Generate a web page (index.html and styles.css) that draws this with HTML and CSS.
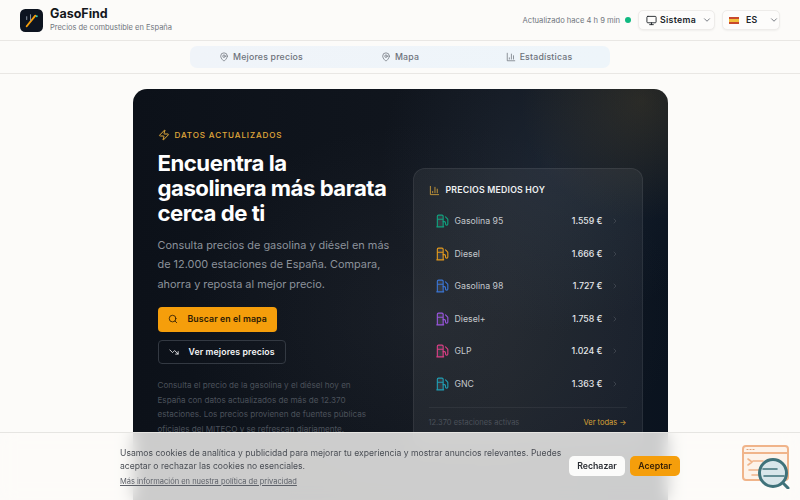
FILE: index.html
```html
<!DOCTYPE html>
<html lang="es">

<head>
  <meta charset="UTF-8">
  <meta name="viewport" content="width=device-width, initial-scale=1.0">
  <title>GasoFind</title>
  <link rel="stylesheet" href="styles.css">
</head>

<body>
  <svg class="sprite" width="0" height="0" aria-hidden="true">
    <symbol id="fuel" viewBox="0 0 24 24">
      <path d="M3 22h12M4 9h10M14 22V4a2 2 0 0 0-2-2H6a2 2 0 0 0-2 2v18Z" />
      <path fill="none" d="M14 13h2a2 2 0 0 1 2 2v2a2 2 0 0 0 2 2a2 2 0 0 0 2-2V9.83a2 2 0 0 0-.59-1.42L18 5" />
    </symbol>
    <symbol id="pin" viewBox="0 0 24 24">
      <path d="M20 10c0 6-8 12-8 12s-8-6-8-12a8 8 0 0 1 16 0Z" />
      <circle cx="12" cy="10" r="3" />
    </symbol>
    <symbol id="bars" viewBox="0 0 24 24">
      <path d="M3 3v18h18M18 17V9M13 17V5M8 17v-3" />
    </symbol>
    <symbol id="chevron-down" viewBox="0 0 24 24">
      <path d="m6 9 6 6 6-6" />
    </symbol>
    <symbol id="chevron-right" viewBox="0 0 24 24">
      <path d="m9 18 6-6-6-6" />
    </symbol>
  </svg>

  <header class="topbar">
    <div class="brand">
      <svg class="logo" viewBox="0 0 24 24">
        <rect width="24" height="24" rx="5.5" fill="#0d1420" />
        <path d="M7 18 16 7" stroke="#f59e0b" stroke-width="2" stroke-linecap="round" />
        <path d="M7 11v-3M11 12V6" stroke="#8a94a3" stroke-width="1" stroke-linecap="round" />
        <circle cx="17.5" cy="7.5" r="1" fill="#2dd4bf" />
      </svg>
      <div>
        <div class="brand-name">GasoFind</div>
        <div class="brand-sub">Precios de combustible en España</div>
      </div>
    </div>
    <div class="top-actions">
      <span class="updated">Actualizado hace 4 h 9 min</span>
      <span class="dot"></span>
      <button class="select select-theme">
        <svg class="ico-theme" viewBox="0 0 24 24">
          <rect x="2" y="3" width="20" height="14" rx="2" />
          <path d="M8 21h8M12 17v4" />
        </svg>
        Sistema
        <svg class="ico-chev"><use href="#chevron-down" /></svg>
      </button>
      <button class="select select-lang">
        <span class="flag"></span>
        ES
        <svg class="ico-chev"><use href="#chevron-down" /></svg>
      </button>
    </div>
  </header>

  <nav class="subnav">
    <div class="tabs">
      <a class="tab"><svg><use href="#pin" /></svg>Mejores precios</a>
      <a class="tab"><svg><use href="#pin" /></svg>Mapa</a>
      <a class="tab"><svg><use href="#bars" /></svg>Estadísticas</a>
    </div>
  </nav>

  <main class="content">
    <section class="hero">
      <div class="hero-left">
        <div class="badge">
          <svg viewBox="0 0 24 24">
            <path d="M4 14a1 1 0 0 1-.78-1.63l9.9-10.2a.5.5 0 0 1 .86.46l-1.92 6.02A1 1 0 0 0 13 10h7a1 1 0 0 1 .78 1.63l-9.9 10.2a.5.5 0 0 1-.86-.46l1.92-6.02A1 1 0 0 0 11 14z" />
          </svg>
          DATOS ACTUALIZADOS
        </div>
        <h1>Encuentra la gasolinera más barata cerca de ti</h1>
        <p class="lead">Consulta precios de gasolina y diésel en más de 12.000 estaciones de España. Compara, ahorra y reposta al mejor precio.</p>
        <div class="hero-btns">
          <a class="btn btn-primary">
            <svg viewBox="0 0 24 24"><circle cx="11" cy="11" r="8" /><path d="m21 21-4.3-4.3" /></svg>
            Buscar en el mapa
          </a>
          <a class="btn btn-ghost">
            <svg viewBox="0 0 24 24"><path d="M22 17l-8.500-8.500-5 5L2 7M16 17h6v-6" /></svg>
            Ver mejores precios
          </a>
        </div>
        <p class="note">Consulta el precio de la gasolina y el diésel hoy en España con datos actualizados de más de 12.370 estaciones. Los precios provienen de fuentes públicas oficiales del MITECO y se refrescan diariamente.</p>
      </div>

      <aside class="prices">
        <div class="prices-title">
          <svg><use href="#bars" /></svg>
          PRECIOS MEDIOS HOY
        </div>
        <ul class="price-list">
          <li class="price-row c-green"><svg class="fuel"><use href="#fuel" /></svg><span class="fuel-name">Gasolina 95</span><span class="fuel-price">1.559 €</span><svg class="go"><use href="#chevron-right" /></svg></li>
          <li class="price-row c-amber"><svg class="fuel"><use href="#fuel" /></svg><span class="fuel-name">Diesel</span><span class="fuel-price">1.666 €</span><svg class="go"><use href="#chevron-right" /></svg></li>
          <li class="price-row c-blue"><svg class="fuel"><use href="#fuel" /></svg><span class="fuel-name">Gasolina 98</span><span class="fuel-price">1.727 €</span><svg class="go"><use href="#chevron-right" /></svg></li>
          <li class="price-row c-purple"><svg class="fuel"><use href="#fuel" /></svg><span class="fuel-name">Diesel+</span><span class="fuel-price">1.758 €</span><svg class="go"><use href="#chevron-right" /></svg></li>
          <li class="price-row c-pink"><svg class="fuel"><use href="#fuel" /></svg><span class="fuel-name">GLP</span><span class="fuel-price">1.024 €</span><svg class="go"><use href="#chevron-right" /></svg></li>
          <li class="price-row c-cyan"><svg class="fuel"><use href="#fuel" /></svg><span class="fuel-name">GNC</span><span class="fuel-price">1.363 €</span><svg class="go"><use href="#chevron-right" /></svg></li>
        </ul>
        <div class="prices-foot">
          <span class="stations">12.370 estaciones activas</span>
          <a class="see-all">Ver todas →</a>
        </div>
      </aside>
    </section>
  </main>

  <div class="cookies">
    <div class="cookies-inner">
      <div class="cookies-text">
        <p>Usamos cookies de analítica y publicidad para mejorar tu experiencia y mostrar anuncios relevantes. Puedes aceptar o rechazar las cookies no esenciales.</p>
        <a class="cookies-link">Más información en nuestra política de privacidad</a>
      </div>
      <button class="cookie-btn cookie-reject">Rechazar</button>
      <button class="cookie-btn cookie-accept">Aceptar</button>
    </div>
  </div>

  <svg class="helper" viewBox="0 0 48 44">
    <rect x="1" y="1" width="45" height="34" rx="3" fill="#fdf3ea" stroke="#f0b48a" stroke-width="2" />
    <path d="M1 8h45" stroke="#f0b48a" stroke-width="2" />
    <path d="M5 4.500h1M8 4.500h1M11 4.500h1" stroke="#e0a27a" stroke-width="1.200" />
    <path d="m6 14 4 3-4 3M11 16h10M7 25h12M10 30h10" stroke="#f0b48a" stroke-width="1.600" fill="none" />
    <circle cx="31" cy="28" r="13.500" fill="#d9e6ea" stroke="#3f727a" stroke-width="3" />
    <path d="M21 24h14M22 31h20" stroke="#3f727a" stroke-width="1.600" />
    <path d="m41 38 5 5" stroke="#3f727a" stroke-width="3" stroke-linecap="round" />
  </svg>
</body>

</html>
```

FILE: styles.css
```css
* {
  box-sizing: border-box;
}

html,
body {
  height: 100%;
  overflow: hidden;
}

body {
  margin: 0;
  background-color: #fcfbf9;
  color: #14171c;
  font-family: Inter, "Liberation Sans", sans-serif;
}

svg {
  fill: none;
  stroke: currentColor;
  stroke-width: 2;
  stroke-linecap: round;
  stroke-linejoin: round;
  flex-shrink: 0;
}

.sprite {
  position: absolute;
}

/* top bar */
.topbar {
  height: 41px;
  display: flex;
  align-items: center;
  justify-content: space-between;
  padding: 0 20px;
  border-bottom: 1px solid #e9e7e4;
}

.brand {
  display: flex;
  align-items: center;
  gap: 7px;
}

.logo {
  width: 23px;
  height: 23px;
  stroke: none;
}

.brand-name {
  font-size: 12.5px;
  font-weight: 700;
  line-height: 16px;
}

.brand-sub {
  font-size: 7.500px;
  line-height: 12px;
  color: #70757d;
}

.top-actions {
  display: flex;
  align-items: center;
}

.updated {
  font-size: 7.600px;
  color: #70757d;
}

.dot {
  width: 6px;
  height: 6px;
  margin: 0 7px 0 5px;
  border-radius: 50%;
  background-color: #10b981;
}

.select {
  height: 20px;
  display: flex;
  align-items: center;
  padding: 0;
  border: 1px solid #eeecea;
  border-radius: 5px;
  background-color: #fdfcfb;
  box-shadow: 0 1px 2px rgba(0, 0, 0, 0.05);
  color: #20242a;
  font-family: inherit;
  font-size: 8.750px;
  font-weight: 600;
  letter-spacing: 0.3px;
}

.select-theme {
  width: 77px;
  padding-left: 7px;
  gap: 3px;
}

.select-lang {
  width: 58px;
  margin-left: 7px;
  padding-left: 6px;
  gap: 7px;
}

.ico-theme {
  width: 11px;
  height: 11px;
  stroke-width: 2;
}

.ico-chev {
  width: 10px;
  height: 10px;
  margin-left: 3px;
  color: #60656d;
}

.select-lang .ico-chev {
  margin-left: 4px;
}

.flag {
  width: 10px;
  height: 7px;
  background: linear-gradient(#c9482b 25%, #f1bf3c 25%, #f1bf3c 75%, #c9482b 75%);
}

/* tabs */
.subnav {
  height: 33px;
  display: flex;
  justify-content: center;
  align-items: center;
  border-bottom: 1px solid #e9e7e4;
}

.tabs {
  width: 420px;
  height: 22px;
  padding: 0 1.5px;
  display: grid;
  grid-template-columns: repeat(3, 1fr);
  border-radius: 7px;
  background: linear-gradient(90deg, #f0f4f9, #eef5fa);
}

.tab {
  display: flex;
  align-items: center;
  justify-content: center;
  gap: 4px;
  color: #6d727a;
  font-size: 8.750px;
  font-weight: 500;
  letter-spacing: 0.2px;
}

.tab svg {
  width: 10px;
  height: 10px;
  stroke-width: 1.800;
}

/* hero */
.content {
  padding-top: 15px;
}

.hero {
  width: 535px;
  height: 411px;
  margin: 0 auto;
  display: flex;
  justify-content: space-between;
  padding: 40px 25px 0;
  border-radius: 14px 14px 0 0;
  color: #fff;
  background-color: #0c1119;
  background-image:
    radial-gradient(circle at 95% 3%, rgba(105, 85, 45, 0.3), transparent 120px),
    radial-gradient(circle at 78% 18%, rgba(50, 65, 85, 0.3), transparent 170px),
    radial-gradient(ellipse at 55% 55%, rgba(70, 75, 85, 0.18), transparent 60%),
    linear-gradient(90deg, #0c1119 0%, #12171f 70%, #0a131f 100%);
}

.hero-left {
  width: 235px;
}

.badge {
  display: flex;
  align-items: center;
  gap: 5px;
  color: #e0a93a;
  font-size: 8.125px;
  font-weight: 500;
  letter-spacing: 0.85px;
  line-height: 12px;
}

.badge svg {
  width: 12px;
  height: 12px;
  stroke-width: 2;
}

h1 {
  margin: 9px 0 0;
  font-size: 22.200px;
  font-weight: 700;
  line-height: 25px;
  letter-spacing: -0.5px;
}

.lead {
  margin: 11px 0 0;
  color: #8c929b;
  font-size: 10.900px;
  line-height: 19.400px;
}

.hero-btns {
  margin-top: 13px;
  display: flex;
  flex-direction: column;
  align-items: flex-start;
  gap: 8px;
}

.btn {
  height: 24.500px;
  display: flex;
  align-items: center;
  font-size: 8.750px;
  font-weight: 600;
  letter-spacing: 0.1px;
  border-radius: 4px;
  white-space: nowrap;
}

.btn svg {
  width: 10px;
  height: 10px;
}

.btn-primary {
  width: 119px;
  padding-left: 10px;
  gap: 10px;
  background-color: #f59e0b;
  color: #2b1a05;
}

.btn-ghost {
  width: 128px;
  padding-left: 10px;
  gap: 10px;
  border: 1px solid #333942;
  color: #f3f4f6;
}

.note {
  width: 222px;
  margin: 14px 0 0;
  color: #4b515a;
  font-size: 8.125px;
  line-height: 14.500px;
}

/* average prices panel */
.prices {
  width: 230px;
  height: 280px;
  margin-top: 39px;
  padding: 14px 15px 0;
  border: 1px solid rgba(255, 255, 255, 0.07);
  border-radius: 12px;
  background-color: rgba(255, 255, 255, 0.06);
}

.prices-title {
  display: flex;
  align-items: center;
  gap: 6px;
  color: #eef0f2;
  font-size: 8.750px;
  font-weight: 600;
  letter-spacing: 0.2px;
  line-height: 14px;
}

.prices-title svg {
  width: 11px;
  height: 11px;
  color: #dba63a;
  stroke-width: 1.800;
}

.price-list {
  list-style: none;
  margin: 8px 0 0;
  padding: 0;
}

.price-row {
  height: 32.500px;
  display: flex;
  align-items: center;
  padding: 0 8px 0 6.500px;
}

.fuel {
  width: 14px;
  height: 14px;
  margin-right: 5.500px;
  stroke-width: 1.900;
  fill: rgba(255, 255, 255, 0.08);
}

.fuel-name {
  flex: 1;
  color: #c4c8cd;
  font-size: 8.750px;
}

.fuel-price {
  color: #e4e6e9;
  font-size: 8.750px;
  font-weight: 500;
}

.go {
  width: 8px;
  height: 8px;
  margin-left: 8px;
  color: #4b515a;
}

.c-green .fuel { color: #10a37f; }
.c-amber .fuel { color: #e59a1c; }
.c-blue .fuel { color: #3b76d6; }
.c-purple .fuel { color: #9a55e0; }
.c-pink .fuel { color: #dd3f86; }
.c-cyan .fuel { color: #1f9fb5; }

.prices-foot {
  margin-top: 7px;
  padding-top: 9px;
  display: flex;
  justify-content: space-between;
  border-top: 1px solid rgba(255, 255, 255, 0.06);
  font-size: 7.500px;
  line-height: 12px;
}

.stations {
  color: #4b515a;
}

.see-all {
  color: #d9a236;
}

/* cookie banner */
.cookies {
  position: fixed;
  left: 0;
  right: 0;
  bottom: 0;
  height: 68px;
  border-top: 1px solid #e6e5e2;
  background-color: rgba(252, 251, 249, 0.8);
  backdrop-filter: blur(8px);
}

.cookies-inner {
  width: 560px;
  margin: 0 auto;
  padding-top: 14px;
  display: flex;
  align-items: center;
}

.cookies-text {
  width: 449px;
  padding-right: 6px;
  color: #4a4e55;
  font-size: 8.600px;
  line-height: 13px;
}

.cookies-text p {
  margin: 0;
}

.cookies-link {
  display: block;
  margin-top: 2px;
  color: #5c6068;
  font-size: 7.500px;
  text-decoration: underline;
}

.cookie-btn {
  height: 20px;
  margin-bottom: 3px;
  border: none;
  border-radius: 5px;
  font-family: inherit;
  font-size: 8.750px;
  font-weight: 600;
}

.cookie-reject {
  width: 56px;
  background-color: #fbfbfa;
  color: #2a2d33;
}

.cookie-accept {
  width: 50px;
  margin-left: 5px;
  background-color: #f59e0b;
  color: #3a2206;
}

.helper {
  position: fixed;
  left: 742px;
  top: 445px;
  width: 48px;
  height: 44px;
  stroke: none;
}
```
